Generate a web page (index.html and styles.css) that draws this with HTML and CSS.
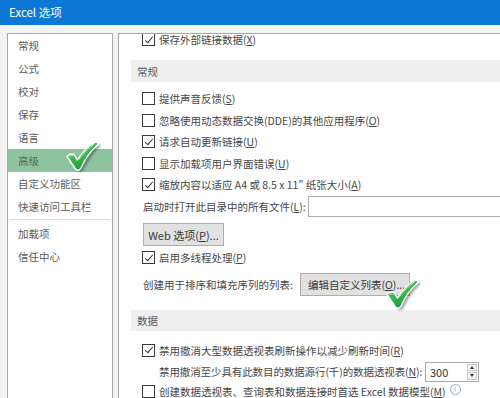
FILE: index.html
```html
<!DOCTYPE html>
<html lang="zh-CN">
<head>
<meta charset="utf-8">
<title>Excel 选项</title>
<link rel="stylesheet" href="styles.css">
</head>
<body>
<div class="window">
  <div class="titlebar">Excel 选项</div>
  <div class="main">
    <nav class="nav">
      <div class="nav-item">常规</div>
      <div class="nav-item">公式</div>
      <div class="nav-item">校对</div>
      <div class="nav-item">保存</div>
      <div class="nav-item">语言</div>
      <div class="nav-item selected">高级</div>
      <div class="nav-item">自定义功能区</div>
      <div class="nav-item">快速访问工具栏</div>
      <div class="nav-sep"></div>
      <div class="nav-item">加载项</div>
      <div class="nav-item">信任中心</div>
    </nav>
    <section class="content">
      <div class="scroller">
        <div class="row"><span class="cb on"></span><span>保存外部链接数据(<u>X</u>)</span></div>
        <div class="header h1">常规</div>
        <div class="row"><span class="cb"></span><span>提供声音反馈(<u>S</u>)</span></div>
        <div class="row"><span class="cb"></span><span>忽略使用动态数据交换(DDE)的其他应用程序(<u>O</u>)</span></div>
        <div class="row"><span class="cb on"></span><span>请求自动更新链接(<u>U</u>)</span></div>
        <div class="row"><span class="cb"></span><span>显示加载项用户界面错误(<u>U</u>)</span></div>
        <div class="row"><span class="cb on"></span><span>缩放内容以适应 A4 或 8.5 x 11" 纸张大小(<u>A</u>)</span></div>
        <div class="row plain"><span class="lbl-startup">启动时打开此目录中的所有文件(<u>L</u>):</span><span class="textbox"></span></div>
        <div class="btn-row"><span class="btn web">Web 选项(<u>P</u>)...</span></div>
        <div class="row mt1"><span class="cb on"></span><span>启用多线程处理(<u>P</u>)</span></div>
        <div class="row plain list-row"><span class="lbl-list">创建用于排序和填充序列的列表:</span><span class="btn edit">编辑自定义列表(<u>O</u>)...</span></div>
        <div class="header h2">数据</div>
        <div class="row"><span class="cb on"></span><span>禁用撤消大型数据透视表刷新操作以减少刷新时间(<u>R</u>)</span></div>
        <div class="row indent"><span class="lbl-pivot">禁用撤消至少具有此数目的数据源行(千)的数据透视表(<u>N</u>):</span>
          <span class="spinner"><span class="spin-val">300</span><span class="spin-btns"><span class="spin up"></span><span class="spin down"></span></span></span>
        </div>
        <div class="row last"><span class="cb"></span><span>创建数据透视表、查询表和数据连接时首选 Excel 数据模型(<u>M</u>)</span><span class="info">i</span></div>
      </div>
    </section>
  </div>

  <svg class="tick tick-nav" viewBox="0 0 36 34" width="36" height="34" aria-hidden="true">
    <defs>
      <linearGradient id="tg" x1="0" y1="0" x2="0.6" y2="1">
        <stop offset="0" stop-color="#9be88c"/>
        <stop offset="0.45" stop-color="#3fbf4d"/>
        <stop offset="1" stop-color="#17923a"/>
      </linearGradient>
      <filter id="ts" x="-30%" y="-30%" width="160%" height="160%"><feGaussianBlur stdDeviation="1.3"/></filter>
    </defs>
    <path transform="translate(3.5,3)" filter="url(#ts)" fill="#000" opacity="0.35" d="M1 15.5 Q4 12 8 13.5 L11.5 19 Q18 7.5 29.5 1 Q32.5 0.8 31.5 4 Q21.5 12.5 15 27 Q12.5 31 9.5 28 Z"/>
    <path transform="translate(1,1)" fill="url(#tg)" stroke="#fff" stroke-width="1.4" stroke-linejoin="round" d="M1 15.5 Q4 12 8 13.5 L11.5 19 Q18 7.5 29.5 1 Q32.5 0.8 31.5 4 Q21.5 12.5 15 27 Q12.5 31 9.5 28 Z"/>
    <path transform="translate(1,1)" fill="none" stroke="#d8ffd0" stroke-width="1" opacity="0.7" d="M3.5 15.2 Q5.5 14.3 7 15 M13 18.5 Q19 9.5 28.5 2.8"/>
  </svg>
  <svg class="tick tick-btn" viewBox="0 0 36 34" width="36" height="34" aria-hidden="true">
    <path transform="translate(3.5,3)" filter="url(#ts)" fill="#000" opacity="0.35" d="M1 15.5 Q4 12 8 13.5 L11.5 19 Q18 7.5 29.5 1 Q32.5 0.8 31.5 4 Q21.5 12.5 15 27 Q12.5 31 9.5 28 Z"/>
    <path transform="translate(1,1)" fill="url(#tg)" stroke="#fff" stroke-width="1.4" stroke-linejoin="round" d="M1 15.5 Q4 12 8 13.5 L11.5 19 Q18 7.5 29.5 1 Q32.5 0.8 31.5 4 Q21.5 12.5 15 27 Q12.5 31 9.5 28 Z"/>
    <path transform="translate(1,1)" fill="none" stroke="#d8ffd0" stroke-width="1" opacity="0.7" d="M3.5 15.2 Q5.5 14.3 7 15 M13 18.5 Q19 9.5 28.5 2.8"/>
  </svg>
</div>
</body>
</html>
```

FILE: styles.css
```css
html, body {
  margin: 0;
  padding: 0;
}
body {
  width: 500px;
  height: 398px;
  overflow: hidden;
  background: #f3f3f3;
  font-family: "Noto Sans CJK SC", "Noto Sans", sans-serif;
  font-size: 10.5px;
  color: #474747;
}
.window {
  position: relative;
  width: 500px;
  height: 398px;
  overflow: hidden;
  display: flex;
  flex-direction: column;
}
.titlebar {
  height: 25px;
  flex: none;
  background: #0a78d4;
  color: #fff;
  font-size: 11.5px;
  line-height: 25px;
  padding-left: 9px;
  box-sizing: border-box;
}
.main {
  flex: 1;
  display: flex;
  gap: 5px;
  padding: 8px 0 0 7px;
  min-height: 0;
}
.nav {
  width: 106px;
  flex: none;
  box-sizing: border-box;
  background: #fff;
  border: 1px solid #a9a9a9;
  border-bottom: none;
  color: #5a5a5a;
}
.nav-item {
  height: 23px;
  line-height: 23px;
  padding-left: 10px;
  white-space: nowrap;
}
.nav-item.selected {
  background: #8ec3a0;
  color: #55665a;
}
.nav-sep {
  height: 1px;
  margin: 1px 2px 2px 2px;
  background: #dcdcdc;
}
.content {
  flex: 1;
  min-width: 0;
  background: #fff;
  border-top: 1px solid #a9a9a9;
  border-left: 1px solid #a9a9a9;
  overflow: hidden;
  padding-left: 12px;
}
.scroller {
  margin-top: -5px;
}
.row {
  height: 21.5px;
  display: flex;
  align-items: center;
  padding-left: 11px;
  white-space: nowrap;
}
.row.plain {
  padding-left: 12px;
}
.row.indent {
  padding-left: 28px;
  height: 21px;
}
.row.mt1 {
  margin-top: 1px;
}
.row.last {
  margin-top: -1px;
}
.cb {
  position: relative;
  flex: none;
  width: 13px;
  height: 13px;
  box-sizing: border-box;
  border: 1px solid #3a3a3a;
  background: #fff;
  margin-right: 4px;
}
.cb.on::after {
  content: "";
  position: absolute;
  left: 3.6px;
  top: 0.6px;
  width: 3.4px;
  height: 7px;
  border: solid #333;
  border-width: 0 1.2px 1.2px 0;
  transform: rotate(40deg);
}
u {
  text-decoration: underline;
  text-underline-offset: 1px;
}
.header {
  background: #efefef;
  color: #5a5a5a;
  padding-left: 6px;
  display: flex;
  align-items: center;
}
.header.h1 {
  height: 22px;
  margin: 9.5px 0 6px 0;
}
.header.h2 {
  height: 21px;
  margin: 14px 0 8.5px 0;
}
.lbl-startup {
  flex: 0 0 165px;
}
.textbox {
  flex: 1;
  height: 21px;
  box-sizing: border-box;
  border: 1px solid #adadad;
  border-right: none;
  background: #fff;
}
.btn-row {
  display: flex;
  padding-left: 12px;
  margin-top: 6px;
}
.btn {
  display: flex;
  align-items: center;
  justify-content: center;
  height: 23px;
  box-sizing: border-box;
  background: #e1e1e1;
  border: 1px solid #adadad;
  color: #3a3a3a;
  white-space: nowrap;
}
.btn.web {
  width: 81px;
  font-size: 11px;
}
.list-row {
  height: 23px;
  margin-top: 4.5px;
}
.lbl-list {
  flex: 0 0 157px;
}
.btn.edit {
  width: 110px;
  justify-content: flex-start;
  padding-left: 7px;
}
.lbl-pivot {
  flex: 0 0 266px;
  letter-spacing: -0.1px;
}
.spinner {
  display: flex;
  width: 54px;
  height: 20px;
  box-sizing: border-box;
  border: 1px solid #a9a9a9;
  background: #fff;
}
.spin-val {
  flex: 1;
  padding-left: 4px;
  font-size: 11px;
  line-height: 18px;
  color: #333;
}
.spin-btns {
  width: 10px;
  display: flex;
  flex-direction: column;
  gap: 1px;
  padding: 1px 1px 1px 0;
}
.spin {
  flex: 1;
  display: flex;
  align-items: center;
  justify-content: center;
  border: 1px solid #c8c8c8;
  background: #f4f4f4;
}
.spin::before {
  content: "";
  width: 0;
  height: 0;
  border-left: 2.5px solid transparent;
  border-right: 2.5px solid transparent;
}
.spin.up::before {
  border-bottom: 3px solid #333;
}
.spin.down::before {
  border-top: 3px solid #333;
}
.info {
  flex: none;
  width: 9px;
  height: 9px;
  margin-left: 4px;
  margin-top: -4px;
  border: 1px solid #8fa9c0;
  border-radius: 50%;
  color: #7d9ab5;
  font-size: 7px;
  line-height: 9px;
  text-align: center;
  font-family: "DejaVu Sans", sans-serif;
}
.tick {
  position: absolute;
}
.tick-nav {
  left: 65px;
  top: 140px;
}
.tick-btn {
  left: 385px;
  top: 278px;
}
```
